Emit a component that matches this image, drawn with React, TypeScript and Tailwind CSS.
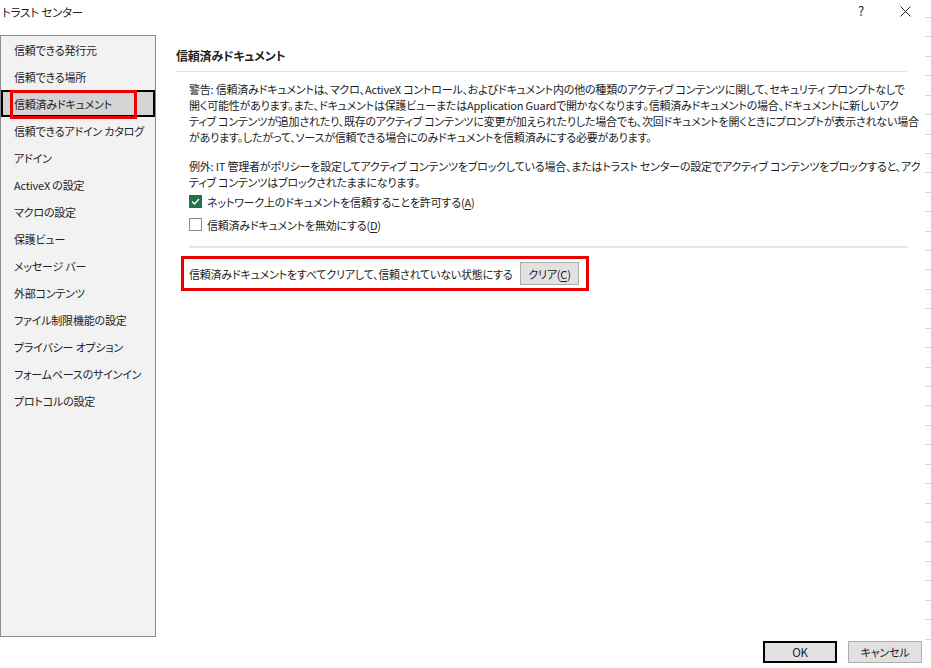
const sideItems = [
  "信頼できる発行元",
  "信頼できる場所",
  "信頼済みドキュメント",
  "信頼できるアドイン カタログ",
  "アドイン",
  "ActiveX の設定",
  "マクロの設定",
  "保護ビュー",
  "メッセージ バー",
  "外部コンテンツ",
  "ファイル制限機能の設定",
  "プライバシー オプション",
  "フォームベースのサインイン",
  "プロトコルの設定",
];

const warningLines = [
  "警告: 信頼済みドキュメントは、マクロ、ActiveX コントロール、およびドキュメント内の他の種類のアクティブ コンテンツに関して、セキュリティ プロンプトなしで",
  "開く可能性があります。また、ドキュメントは保護ビューまたはApplication Guardで開かなくなります。信頼済みドキュメントの場合、ドキュメントに新しいアク",
  "ティブ コンテンツが追加されたり、既存のアクティブ コンテンツに変更が加えられたりした場合でも、次回ドキュメントを開くときにプロンプトが表示されない場合",
  "があります。したがって、ソースが信頼できる場合にのみドキュメントを信頼済みにする必要があります。",
];

const exceptionLines = [
  "例外: IT 管理者がポリシーを設定してアクティブ コンテンツをブロックしている場合、またはトラスト センターの設定でアクティブ コンテンツをブロックすると、アク",
  "ティブ コンテンツはブロックされたままになります。",
];

function CheckRow({ checked, label, accel }: { checked: boolean; label: string; accel: string }) {
  return (
    <div className="flex h-[23px] items-center gap-[5px]">
      {checked ? (
        <span className="flex h-[13px] w-[13px] items-center justify-center bg-[#217346]">
          <svg width="9" height="7" viewBox="0 0 9 7">
            <path d="M1 3.5 L3.5 6 L8 1" fill="none" stroke="white" strokeWidth="1.4" />
          </svg>
        </span>
      ) : (
        <span className="h-[13px] w-[13px] border border-[#8a8a8a] bg-white" />
      )}
      <span className="whitespace-nowrap">
        {label}(<span className="underline underline-offset-2">{accel}</span>)
      </span>
    </div>
  );
}

export default function App() {
  return (
    <div className="relative h-[668px] w-[931px] overflow-hidden bg-white text-[11px] leading-[16px] tracking-[-0.2px] text-[#222] [font-family:'Noto_Sans_CJK_JP','Noto_Sans',sans-serif] [font-feature-settings:'palt']">
      {/* title bar */}
      <div className="flex h-[35px] items-start">
        <div className="pl-[2px] pt-[4px] text-[11.5px]">トラスト センター</div>
        <div className="ml-auto flex items-center gap-[36px] pr-[20px] pt-[3px]">
          <span className="text-[13px]">?</span>
          <svg width="11" height="11" viewBox="0 0 11 11">
            <path d="M0.5 0.5 L10.5 10.5 M10.5 0.5 L0.5 10.5" stroke="#222" strokeWidth="1" />
          </svg>
        </div>
      </div>

      <div className="flex">
        {/* sidebar */}
        <div className="h-[602px] w-[156px] border border-[#8c8c8c] bg-[#f2f2f2]">
          {sideItems.map((item) =>
            item === "信頼済みドキュメント" ? (
              <div
                key={item}
                className="relative flex h-[27px] items-center border-2 border-black bg-[#d4d4d4] pl-[11px]"
              >
                {item}
                <div className="absolute left-[7px] top-[-2px] h-[29px] w-[127px] border-[3px] border-[#ee0000]" />
              </div>
            ) : (
              <div key={item} className="flex h-[27px] items-center pl-[13px] whitespace-nowrap">
                {item}
              </div>
            )
          )}
        </div>

        {/* main content */}
        <div className="ml-[20px] w-[731px]">
          <div className="border-b border-[#e3e3e3] pb-[7px] pt-[13px] text-[12px] font-semibold">
            信頼済みドキュメント
          </div>
          <div className="pl-[13px] pt-[9px]">
            <div>
              {warningLines.map((l) => (
                <div key={l} className="whitespace-nowrap">{l}</div>
              ))}
            </div>
            <div className="mt-[13px]">
              {exceptionLines.map((l) => (
                <div key={l} className="whitespace-nowrap">{l}</div>
              ))}
            </div>
            <CheckRow checked label="ネットワーク上のドキュメントを信頼することを許可する" accel="A" />
            <CheckRow checked={false} label="信頼済みドキュメントを無効にする" accel="D" />
            <div className="mt-[10px] h-[2px] w-[719px] bg-[#e6e6e6]" />
          </div>
          <div className="ml-[5px] mt-[8px] flex h-[35px] w-[408px] items-center border-[3px] border-[#ee0000] pl-[5px]">
            <span className="whitespace-nowrap">信頼済みドキュメントをすべてクリアして、信頼されていない状態にする</span>
            <button className="ml-auto mr-[7px] h-[23px] w-[59px] shrink-0 whitespace-nowrap border border-[#adadad] bg-[#e1e1e1] text-[11px]">
              クリア(<span className="underline underline-offset-2">C</span>)
            </button>
          </div>
        </div>
      </div>

      {/* footer buttons */}
      <div className="mt-[4px] flex justify-end gap-[11px] pr-[9px]">
        <button className="h-[22px] w-[74px] border-2 border-black bg-[#e1e1e1] text-[11.5px]">OK</button>
        <button className="h-[22px] w-[74px] border border-[#adadad] bg-[#e1e1e1]">キャンセル</button>
      </div>

      {/* window edge ticks */}
      <div className="absolute right-0 top-[17px] flex w-[6px] flex-col">
        {Array.from({ length: 33 }).map((_, i) => (
          <div key={i} className="h-[19.43px] border-t border-[#d6d6d6]" />
        ))}
      </div>
    </div>
  );
}
